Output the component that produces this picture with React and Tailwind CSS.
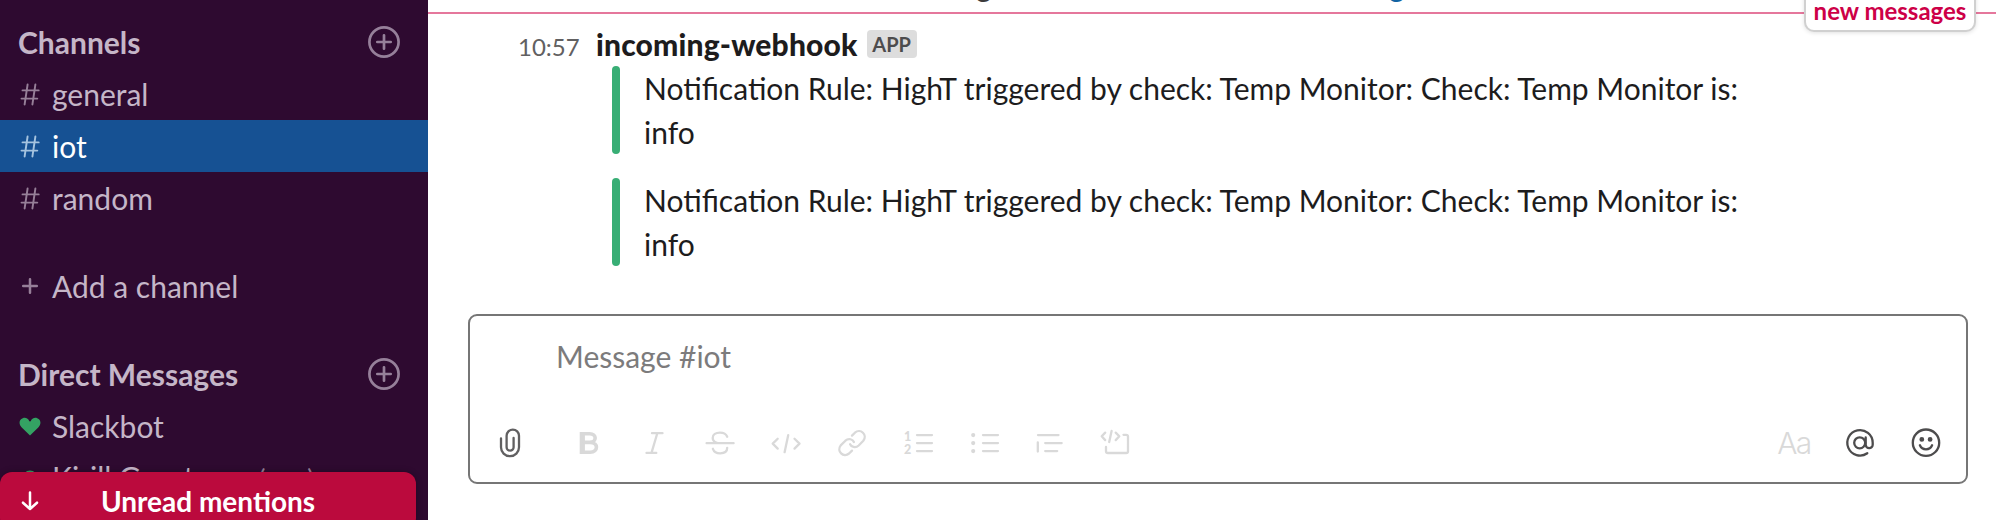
const lato = "font-['Lato',sans-serif]";

const PlusCircle = () => (
  <svg className="h-8 w-8 text-[#96809a]" viewBox="0 0 32 32" fill="none" stroke="currentColor" strokeWidth="2.7" strokeLinecap="round">
    <circle cx="16" cy="16" r="14.6" />
    <path d="M16 9.300v13.400M9.300 16h13.400" />
  </svg>
);

const Hash = ({ active }) => (
  <svg className={active ? "h-6 w-5 text-[#a5c3df]" : "h-6 w-5 text-[#967f98]"} viewBox="0 0 20 24" fill="none" stroke="currentColor" strokeWidth="1.9" strokeLinecap="round">
    <path d="M7.600 2.500 4.600 22.500M15.400 2.500l-3 20M2.500 8.400h16.200M1.500 16.600h15.800" />
  </svg>
);

const Section = ({ title, className }) => (
  <div className={"flex h-[52px] items-center justify-between pl-[18px] pr-7 " + className}>
    <h2 className="text-[30px] leading-[44px] font-bold text-[#c5b6c8]">{title}</h2>
    <PlusCircle />
  </div>
);

const Row = ({ icon, label, active }) => (
  <div className={active ? "flex h-[52px] shrink-0 items-center bg-[#165193] text-white" : "flex h-[52px] shrink-0 items-center text-[#c5b6c8]"}>
    <span className="ml-5 flex w-8 items-center">{icon}</span>
    <span className="text-[30px] leading-[44px] whitespace-nowrap">{label}</span>
  </div>
);

const Tool = ({ children, className = "text-[#d9d9d9]" }) => (
  <svg className={"h-8 w-8 shrink-0 " + className} viewBox="0 0 32 32" fill="none" stroke="currentColor" strokeWidth="2.3" strokeLinecap="round" strokeLinejoin="round">
    {children}
  </svg>
);

const Attachment = () => (
  <div className="flex h-[88px] gap-6">
    <div className="w-2 rounded-full bg-[#38ae75]" />
    <p className="w-[1120px] text-[30px] leading-[44px] text-[#1d1c1d]">
      Notification Rule: HighT triggered by check: Temp Monitor: Check: Temp Monitor is: info
    </p>
  </div>
);

const Toolbar = () => (
  <div className="mt-[49px] flex h-8 items-center gap-[34px] px-6">
    <Tool className="mr-3 text-[#616061]">
      <path d="M7 11.500v8.700a9 9 0 0 0 18 0V8.800a6.200 6.200 0 0 0-12.400 0v11.400a3.500 3.500 0 0 0 7 0V11" />
    </Tool>
    <Tool>
      <path strokeWidth="5.200" strokeLinecap="butt" d="M10.300 5v22" />
      <path strokeWidth="3.600" d="M9.700 6.800h8c7.300 0 7.300 8.600 0 8.600h-5 5.500c8.300 0 8.300 9.800 0 9.800H9.700" />
    </Tool>
    <Tool>
      <path d="M14 6.200H24.500M8.500 25.900h9.800M19.300 6.200 13.500 25.900" />
    </Tool>
    <Tool>
      <path d="M2.600 16.200h27M23.200 9.700C22 6.800 19.300 5.700 16 5.700c-4.200 0-7.300 1.900-7.300 5.200 0 2.300 1.600 4 4.300 5M8.900 21.800c1 2.900 3.700 4.500 7.300 4.500 4.300 0 7-2.100 7-5.500" />
    </Tool>
    <Tool>
      <path d="M7.700 11.700 2.700 16.600l5 5M24.500 11.700l5 4.900-5 5M18.200 8.200l-3.600 17" />
    </Tool>
    <Tool>
      <path d="M16 8.600 18.900 5.700c5.600-4.800 13 2.300 8.400 8.100l-4.600 4.700c-3.300 3-7.500 1.300-8.600-1.300M16 23.600l-2.900 2.900c-5.600 4.700-12.900-2.300-8.400-8.100l4.700-4.700c3.300-3 7.400-1.300 8.500 1.300" />
    </Tool>
    <Tool>
      <path d="M15 8.100h15M15 16.100h15M15 24.100h15" />
      <text x="2" y="13.700" fill="currentColor" stroke="none" className="text-[12.500px] font-black">1</text>
      <text x="2" y="26.600" fill="currentColor" stroke="none" className="text-[12.500px] font-black">2</text>
    </Tool>
    <Tool>
      <path d="M15 8.100h15M15 16.100h15M15 24.100h15" />
      <path strokeWidth="4.200" d="M5.200 8.100h.01M5.200 16.100h.01M5.200 24.100h.01" />
    </Tool>
    <Tool>
      <path d="M4 8.100h20.500M11.200 16.100h16.500M11.200 24.100h12M3.800 15.500v9" />
    </Tool>
    <Tool>
      <path d="M5.200 5.600 1.700 9.300l3.500 3.800M15.700 5.600l3.600 3.700-3.600 3.800M11.600 3.900 9.200 15M23.500 7.800h2.700q1.800 0 1.800 1.800v14.600q0 1.800-1.800 1.800H8q-2 0-2-1.800V20" />
    </Tool>
    <div className="ml-auto flex items-center gap-[34px]">
      <span className="-mr-px flex w-[34px] justify-center font-['Inter',sans-serif] text-[30px] leading-8 font-light tracking-[-1.5px] whitespace-nowrap text-[#d9d9d9]">Aa</span>
      <Tool className="text-[#4d4c4d]">
        <path d="M23.300 26.200A12.700 12.700 0 1 1 28.700 15.700v2a3.500 3.500 0 0 1-7 0V10.500" />
        <circle cx="15.700" cy="15.800" r="5.500" />
      </Tool>
      <Tool className="text-[#4d4c4d]">
        <circle cx="16" cy="15.700" r="13.200" />
        <path d="M9.900 18.300c2.200 5.300 10 5.300 12.200 0" />
        <path strokeWidth="4.800" d="M11.800 12.400h.01M20.100 12.400h.01" />
      </Tool>
    </div>
  </div>
);

export default function App() {
  return (
    <div className={"flex h-[520px] w-[1996px] overflow-hidden bg-white " + lato}>
      <aside className="relative flex h-full w-[428px] shrink-0 flex-col overflow-hidden bg-[#2e0a30]">
        <Section title="Channels" className="mt-4" />
        <Row icon={<Hash />} label="general" />
        <Row icon={<Hash active />} label="iot" active />
        <Row icon={<Hash />} label="random" />
        <div className="mt-9">
          <Row
            icon={
              <svg className="h-5 w-5 text-[#967f98]" viewBox="0 0 20 20" fill="none" stroke="currentColor" strokeWidth="2.5" strokeLinecap="round">
                <path d="M10 3.200v13.600M3.200 10h13.600" />
              </svg>
            }
            label="Add a channel"
          />
        </div>
        <Section title="Direct Messages" className="mt-9 shrink-0" />
        <Row
          icon={
            <svg className="-ml-px h-[19px] w-[22px] text-[#34a263]" viewBox="0 0 22 19" fill="currentColor">
              <path d="M11 18.600 2.500 10.300C-.2 7.600.2 4 2 2.200 4.300-.2 8.500.2 9.800 3.100q.2.500.2 1.200h2q0-.7.2-1.200C13.500.2 17.700-.2 20 2.200c1.800 1.800 2.200 5.400-.5 8.100Z" />
            </svg>
          }
          label="Slackbot"
        />
        <Row
          icon={
            <svg className="h-5 w-5 text-[#34a263]" viewBox="0 0 20 20" fill="currentColor">
              <circle cx="10" cy="10" r="7.500" />
            </svg>
          }
          label={<>Kirill Gvortsova <span className="-ml-[3px] text-[26px] text-[#967f98]">(you)</span></>}
        />
        <div className="absolute top-[472px] left-0 flex h-[58px] w-[416px] items-center justify-center rounded-[12px] bg-[#bb0a3d] shadow-[0_0_6px_rgba(0,0,0,0.3)]">
          <svg className="absolute left-5 h-5 w-5 text-white" viewBox="0 0 20 20" fill="none" stroke="currentColor" strokeWidth="2.500" strokeLinecap="round" strokeLinejoin="round">
            <path d="M10 1.500v16.500M3 11.700l7 6.300 7-6.300" />
          </svg>
          <span className="text-[28px] leading-[44px] font-bold text-white">Unread mentions</span>
        </div>
      </aside>

      <main className="relative flex min-w-0 flex-1 flex-col">
        <div className="flex h-3 w-full shrink-0 items-end overflow-hidden pb-[5px] pl-[548px] text-[30px] leading-[44px]">
          <span className="w-[413px] text-[#3c3b3c]">g</span>
          <span className="text-[#1264a3]">g</span>
        </div>
        <div className="h-0.5 w-full shrink-0 bg-[#e5779c]" />
        <div className="absolute -top-6 right-5 flex h-14 w-[172px] items-end justify-center rounded-[10px] border-2 border-[#d0d0d0] bg-white pb-[3px] text-[24px] leading-8 font-bold text-[#cd0047] shadow-[0_1px_4px_rgba(0,0,0,0.12)]">
          new messages
        </div>

        <section className="flex flex-col pt-2">
          <div className="flex h-11 items-baseline">
            <time className="ml-[90px] w-[78px] text-[24px] leading-[30px] text-[#616061]">10:57</time>
            <span className="text-[30px] leading-[44px] font-black tracking-[0.17px] text-[#1d1c1d]">incoming-webhook</span>
            <span className="mt-2 ml-[9px] flex h-7 w-[50px] items-center justify-center self-start rounded-[4px] bg-[#dddddd] text-[20px] leading-7 font-bold text-[#4d4c4d]">APP</span>
          </div>
          <div className="ml-[184px] flex flex-col gap-6">
            <Attachment />
            <Attachment />
          </div>
        </section>

        <section className="mt-12 ml-10 flex h-[170px] w-[1500px] shrink-0 flex-col rounded-[9px] border-2 border-[#767676]">
          <div className="mt-[18px] ml-[86px] text-[30px] leading-[44px] text-[#7c7b7c]">Message #iot</div>
          <Toolbar />
        </section>
      </main>
    </div>
  );
}
